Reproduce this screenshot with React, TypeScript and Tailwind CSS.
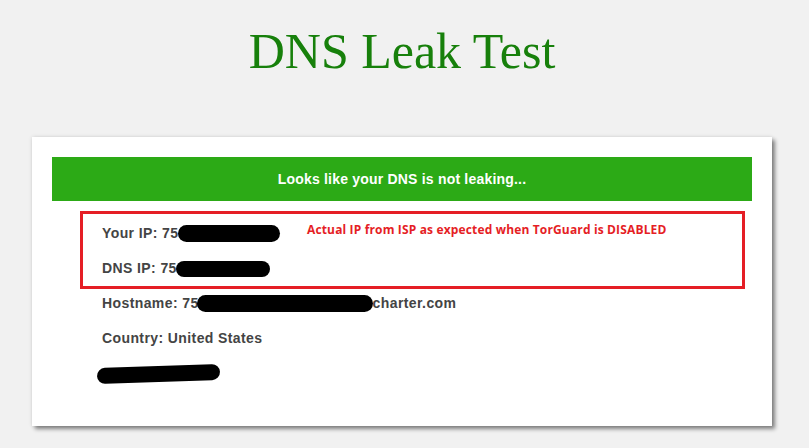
import React from 'react'

function Blob({ className }: { className: string }) {
  return <span className={`inline-block bg-black rounded-full align-middle ${className}`} />
}

export default function App() {
  return (
    <div className="min-h-[448px] w-full bg-[#f1f1f1] overflow-hidden" style={{ fontFamily: '"Liberation Sans", Arial, sans-serif' }}>
      <div className="ml-[32px] w-[740px]">
        <h1
          className="pt-[26px] text-center text-[50px] leading-[50px] text-[#17800b]"
          style={{ fontFamily: '"Liberation Serif", "Times New Roman", serif' }}
        >
          DNS Leak Test
        </h1>

        <div className="relative mt-[61px] bg-white px-[20px] pt-[20px] pb-[35px] shadow-[3px_3px_4px_rgba(0,0,0,0.45),0_0_4px_rgba(0,0,0,0.12)]">
          <div className="flex h-[44px] items-center justify-center bg-[#2caa16] text-[14px] font-bold tracking-[0.2px] text-white">
            Looks like your DNS is not leaking...
          </div>

          <div className="mt-[15px] flex flex-col pl-[50px] text-[14px] font-bold tracking-[0.4px] text-[#444]">
            <div className="flex h-[35px] items-center">
              <span>Your IP: 75</span>
              <Blob className="-ml-[1px] h-[17px] w-[102px] rounded-[8px]" />
            </div>
            <div className="flex h-[35px] items-center">
              <span>DNS IP: 75</span>
              <Blob className="-ml-[1px] h-[16px] w-[94px] rounded-[8px]" />
            </div>
            <div className="flex h-[35px] items-center">
              <span>Hostname: 75</span>
              <Blob className="-ml-[2px] h-[17px] w-[176px] rounded-[8px]" />
              <span>charter.com</span>
            </div>
            <div className="flex h-[35px] items-center">
              <span>Country: United States</span>
            </div>
            <div className="flex h-[35px] items-center">
              <Blob className="-ml-[5px] h-[16px] w-[123px] -rotate-2 rounded-[8px]" />
            </div>
          </div>

          {/* annotation overlay */}
          <div className="absolute left-[48px] top-[74px] h-[78px] w-[665px] border-[3px] border-[#e51e25]" />
          <div
            className="absolute left-[275px] top-[84px] text-[12px] font-bold tracking-[0.15px] text-[#e51e25]"
            style={{ fontFamily: '"Open Sans", "Liberation Sans", sans-serif' }}
          >
            Actual IP from ISP as expected when TorGuard is DISABLED
          </div>
        </div>
      </div>
    </div>
  )
}
